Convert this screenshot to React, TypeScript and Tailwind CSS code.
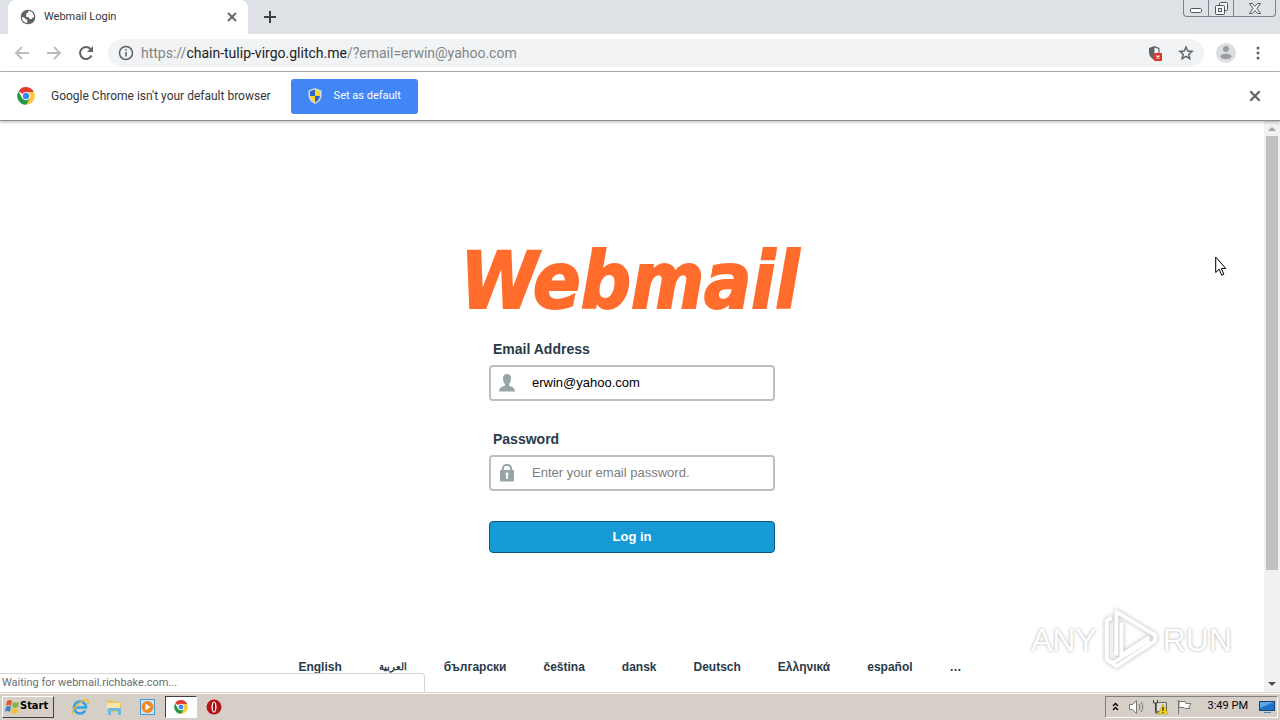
import React from 'react';

const LANGUAGES = ['English', 'العربية', 'български', 'čeština', 'dansk', 'Deutsch', 'Ελληνικά', 'español'];

const ChromeLogo = ({ className }: { className: string }) => (
  <svg viewBox="0 0 48 48" className={className} aria-hidden="true">
    <path d="M24 24 4.1 11.5A23 23 0 0 1 45 14H24z" fill="#e33b2e" />
    <path d="M24 14h21a23 23 0 0 1-20 33l9-17z" fill="#fcc934" />
    <path d="M4.1 12A23 23 0 0 0 25 47l9-17-10 4-10-4z" fill="#279847" />
    <circle cx="24" cy="24" r="11" fill="#fff" />
    <circle cx="24" cy="24" r="8.5" fill="#4285f4" />
  </svg>
);

const Cross = ({ className }: { className: string }) => (
  <svg viewBox="0 0 12 12" className={className} fill="none" stroke="currentColor" strokeWidth="1.8" aria-hidden="true">
    <path d="M2 2l8 8M10 2l-8 8" />
  </svg>
);

const TabStrip = () => (
  <div className="flex h-[34px] shrink-0 bg-[#dee1e6] pl-2">
    <div className="flex w-[240px] items-center rounded-t-lg bg-white pl-3 pr-[10px]">
      <svg viewBox="0 0 24 24" className="h-4 w-4 shrink-0" aria-hidden="true">
        <circle cx="12" cy="12" r="11" fill="#5f6368" />
        <path d="M13 3c-1 1-.5 2.500-2 3-1.500.4-2 1.500-1.500 3C8 10.500 9 12 11 12c2.500 0 3 1 3 3h3.500c1-2 2.500-2.500 3.500-3C21 7 17.500 3 13 3z" fill="#fff" />
        <path d="M3 12.500c2 0 4 .5 5 2 1 1.300 3 .5 3 2.500v4C6.500 21 3 17.500 3 12.500z" fill="#fff" />
      </svg>
      <span className="ml-2 flex-1 text-[11px] text-[#333639]">Webmail Login</span>
      <button aria-label="Close tab" className="text-[#5f6368]"><Cross className="h-3 w-3" /></button>
    </div>
    <button aria-label="New tab" className="ml-4 text-[#3c4043]">
      <svg viewBox="0 0 12 12" className="h-3 w-3" stroke="currentColor" strokeWidth="2" aria-hidden="true"><path d="M6 0v12M0 6h12" /></svg>
    </button>
    <div className="ml-auto mr-1 flex h-[17px] rounded-b border border-t-0 border-[#7c818c] text-[#50545f]">
      <button aria-label="Minimize" className="flex w-[25px] items-end justify-center border-r border-[#7c818c] pb-[3px]">
        <svg viewBox="0 0 12 5" className="h-[5px] w-3" aria-hidden="true"><rect x=".5" y=".5" width="11" height="4" rx="1" fill="#fff" stroke="currentColor" /></svg>
      </button>
      <button aria-label="Restore" className="flex w-[25px] items-center justify-center border-r border-[#7c818c]">
        <svg viewBox="0 0 13 13" className="h-[13px] w-[13px]" fill="#f5f6f8" stroke="currentColor" aria-hidden="true">
          <rect x="4.5" y=".5" width="8" height="8" rx="1" />
          <rect x=".5" y="3.5" width="9" height="9" rx="1" />
          <rect x="3.5" y="6.5" width="3" height="3" />
        </svg>
      </button>
      <button aria-label="Close" className="flex w-[41px] items-center justify-center">
        <svg viewBox="0 0 12 11" className="h-[11px] w-3" fill="#f5f6f8" stroke="currentColor" aria-hidden="true">
          <path d="M.5.5h3L6 3.500 8.500.5h3L8 5.500l3.500 5h-3L6 7.500l-2.500 3h-3L4 5.500z" />
        </svg>
      </button>
    </div>
  </div>
);

const Toolbar = () => (
  <div className="flex h-[38px] shrink-0 items-center border-b border-[#b3b5b8] bg-white px-[14px]">
    <button aria-label="Back" className="text-[#babcbe]">
      <svg viewBox="0 0 16 16" className="h-4 w-4" fill="none" stroke="currentColor" strokeWidth="1.8" aria-hidden="true"><path d="M15 8H2M8 2 2 8l6 6" /></svg>
    </button>
    <button aria-label="Forward" className="ml-4 text-[#babcbe]">
      <svg viewBox="0 0 16 16" className="h-4 w-4" fill="none" stroke="currentColor" strokeWidth="1.8" aria-hidden="true"><path d="M1 8h13M8 2l6 6-6 6" /></svg>
    </button>
    <button aria-label="Reload" className="ml-4 text-[#5f6368]">
      <svg viewBox="0 0 16 16" className="h-4 w-4" aria-hidden="true">
        <path d="M13.500 10.500A6 6 0 1 1 12.500 4" fill="none" stroke="currentColor" strokeWidth="2" />
        <path d="M15 1v6H9z" fill="currentColor" />
      </svg>
    </button>
    <div className="ml-[14px] flex h-7 flex-1 items-center rounded-full bg-[#f1f3f4] px-[10px]">
      <svg viewBox="0 0 16 16" className="h-4 w-4 shrink-0 text-[#5f6368]" aria-hidden="true">
        <circle cx="8" cy="8" r="6.5" fill="none" stroke="currentColor" strokeWidth="1.5" />
        <path d="M7.200 7h1.600v4.500H7.200zM7.200 4.200h1.600v1.600H7.200z" fill="currentColor" />
      </svg>
      <div className="ml-[7px] flex-1 text-sm text-[#80868b]">
        https://<span className="text-[#202124]">chain-tulip-virgo.glitch.me</span>/?email=erwin@yahoo.com
      </div>
      <svg viewBox="0 0 16 16" className="h-4 w-4" aria-hidden="true">
        <path d="M7.500 1 2 3v4c0 4 2.500 6.500 5.500 8 3-1.500 5-4 5-8V3z" fill="#5f6368" />
        <path d="M7.500 2.500v11c2.500-1.500 3.800-3.500 3.800-6.500V4z" fill="#fff" />
        <rect x="7" y="8" width="8" height="8" rx="1" fill="#d9362b" />
        <path d="M9.500 10.500l3 3m0-3l-3 3" stroke="#fff" strokeWidth="1.2" />
      </svg>
      <svg viewBox="0 0 24 24" className="ml-[15px] h-4 w-4" fill="none" stroke="#5f6368" strokeWidth="2.2" aria-hidden="true">
        <path d="M12 3l2.600 6 6.600.6-5 4.300 1.500 6.500-5.700-3.500-5.700 3.500 1.500-6.500-5-4.300 6.600-.6z" />
      </svg>
    </div>
    <button aria-label="Profile" className="ml-3">
      <svg viewBox="0 0 20 20" className="h-5 w-5" aria-hidden="true">
        <circle cx="10" cy="10" r="10" fill="#dcdde0" />
        <circle cx="10" cy="6" r="3" fill="#9b9ea2" />
        <ellipse cx="10" cy="13.5" rx="5.5" ry="2.8" fill="#9b9ea2" />
      </svg>
    </button>
    <button aria-label="Menu" className="ml-[14px] text-[#5f6368]">
      <svg viewBox="0 0 16 16" className="h-4 w-4" fill="currentColor" aria-hidden="true">
        <circle cx="8" cy="3" r="1.5" />
        <circle cx="8" cy="8" r="1.5" />
        <circle cx="8" cy="13" r="1.5" />
      </svg>
    </button>
  </div>
);

const ShieldIcon = () => (
  <svg viewBox="0 0 16 16" className="h-4 w-4" aria-hidden="true">
    <path d="M8 0 1.500 2.500V7c0 4.500 3 7.500 6.500 9 3.500-1.500 6.500-4.500 6.500-9V2.500z" fill="#d4dbe6" />
    <path d="M8 1.500 3 3.300V8h5z" fill="#2d68c4" />
    <path d="M8 1.500l5 1.800V8H8z" fill="#f9d535" />
    <path d="M3 8h5v6.500C5.500 13.300 3.300 11 3 8z" fill="#f9d535" />
    <path d="M8 8h5c-.3 3-2.500 5.300-5 6.500z" fill="#2d68c4" />
  </svg>
);

const DefaultBrowserBar = () => (
  <div className="z-10 flex h-[49px] shrink-0 items-center border-b border-[#8f8f8f] bg-white pl-[17px] pr-[18px] shadow-[0_1px_3px_rgba(0,0,0,0.3)]">
    <ChromeLogo className="h-[18px] w-[18px]" />
    <span className="ml-4 text-[12px] text-[#333639]">Google Chrome isn't your default browser</span>
    <button className="ml-5 flex h-[35px] w-[127px] items-center rounded-[3px] bg-[#4285f4] pl-4 text-[11px] text-white">
      <ShieldIcon />
      <span className="ml-[11px]">Set as default</span>
    </button>
    <button aria-label="Dismiss" className="ml-auto text-[#5f6368]"><Cross className="h-[14px] w-[14px]" /></button>
  </div>
);

const LoginForm = () => (
  <form className="mt-3 flex w-[286px] flex-col" onSubmit={(e) => e.preventDefault()}>
    <label htmlFor="email" className="pl-1 text-sm font-bold text-[#293a4a]">Email Address</label>
    <div className="mt-[6px] flex h-9 items-center rounded-[4px] border-2 border-[#bebebe] bg-white pl-2">
      <svg viewBox="0 0 16 18" className="h-[18px] w-4 shrink-0" fill="#95a5a6" aria-hidden="true">
        <path d="M8 0C5 0 3.800 2 4 5c.1 2.500 1 4 2 5v1.500C4 12.800.5 12.500 0 17.500h16c-.5-5-4-4.700-6-6V10c1-1 1.900-2.500 2-5 .2-3-1-5-4-5z" />
      </svg>
      <input id="email" type="text" defaultValue="erwin@yahoo.com" className="ml-[17px] min-w-0 flex-1 text-[13px] text-black outline-none" />
    </div>
    <label htmlFor="password" className="mt-7 pl-1 text-sm font-bold text-[#293a4a]">Password</label>
    <div className="mt-[6px] flex h-9 items-center rounded-[4px] border-2 border-[#bebebe] bg-white pl-2">
      <svg viewBox="0 0 16 18" className="h-[18px] w-4 shrink-0" aria-hidden="true">
        <path d="M3.800 8V5a4.200 4.200 0 0 1 8.400 0v3" fill="none" stroke="#95a5a6" strokeWidth="2" />
        <rect x="1" y="6" width="14" height="11.5" rx="1" fill="#95a5a6" />
        <path d="M8 8.500a1.700 1.700 0 0 1 .9 3.100V15H7.100v-3.400A1.700 1.700 0 0 1 8 8.500z" fill="#fff" />
      </svg>
      <input id="password" type="password" placeholder="Enter your email password." className="ml-[17px] min-w-0 flex-1 text-[13px] placeholder-[#7d7d7d] outline-none" />
    </div>
    <button className="mt-[30px] h-8 rounded-[4px] border border-[#095779] bg-[#179bd7] text-[13px] font-bold text-white">Log in</button>
  </form>
);

const Watermark = () => (
  <div className="absolute bottom-5 right-12 flex items-center font-['Liberation_Sans',sans-serif] text-[32px] leading-none text-white [text-shadow:0_0_3px_rgba(0,0,0,0.35)]">
    <span>ANY</span>
    <svg viewBox="0 0 60 66" className="ml-1 h-[64px] w-[58px] drop-shadow-[0_0_2px_rgba(0,0,0,0.3)]" fill="none" stroke="#fff" strokeWidth="4" strokeLinejoin="round" aria-hidden="true">
      <path d="M16 49V4l40 24v6L16 60l-4-3" />
      <path d="M21 15v34l29-19M11 10l-5 3v40l6 4 38-24" />
    </svg>
    <span className="ml-1">RUN</span>
  </div>
);

const Scrollbar = () => (
  <div className="flex w-4 shrink-0 flex-col items-center bg-[#f1f1f1] py-1">
    <svg viewBox="0 0 8 8" className="h-2 w-2" fill="#a3a3a3" aria-hidden="true"><path d="M0 6l4-4 4 4z" /></svg>
    <div className="mt-[3px] h-[77%] w-3 bg-[#c1c1c1]" />
    <svg viewBox="0 0 8 8" className="mt-auto h-2 w-2" fill="#505050" aria-hidden="true"><path d="M0 2l4 4 4-4z" /></svg>
  </div>
);

const Taskbar = () => (
  <footer className="flex h-7 shrink-0 items-center border-t border-[#d4d0c8] bg-[#d6cfc8] pl-[2px] shadow-[inset_0_1px_0_#fff]">
    <button className="flex h-[22px] w-[52px] items-center border border-b-[#404040] border-l-white border-r-[#404040] border-t-white pl-[1px] font-['DejaVu_Sans_Condensed','DejaVu_Sans',sans-serif] text-[11px] font-bold text-black">
      <svg viewBox="0 0 16 16" className="h-4 w-4 shrink-0" aria-hidden="true">
        <path d="M3 2q3-2 5 0L7 7q-3-2-5 0z" fill="#e5592b" />
        <path d="M9 3q3 1.500 6 0l-1 5q-3 1.500-6 0z" fill="#7db648" />
        <path d="M2 8q3-2 5 0l-1 5q-3-2-5 0z" fill="#3b82cf" />
        <path d="M8 9q3 1.500 6 0l-1 5q-3 1.500-6 0z" fill="#f6c130" />
      </svg>
      Start
    </button>
    <button aria-label="Internet Explorer" className="ml-[17px]">
      <svg viewBox="0 0 18 18" className="h-[18px] w-[18px]" fill="none" aria-hidden="true">
        <path d="M14.200 12.500A6 6 0 1 1 15 9.500H5" stroke="#35a3df" strokeWidth="2.6" />
        <path d="M2 16.500C-1 13 11 0 17 2c1 1 0 3-1 4" stroke="#eab838" strokeWidth="1.3" />
      </svg>
    </button>
    <button aria-label="Explorer" className="ml-4">
      <svg viewBox="0 0 18 18" className="h-[18px] w-[18px]" aria-hidden="true">
        <path d="M2 2h6l1 2h7v10H2z" fill="#edc65b" />
        <path d="M2 5h13v6H2z" fill="#f9e8a4" />
        <path d="M3 10h13v7h-3v-4H6v4H3z" fill="#6db9df" />
      </svg>
    </button>
    <button aria-label="Media Player" className="ml-4">
      <svg viewBox="0 0 18 18" className="h-[18px] w-[18px]" aria-hidden="true">
        <rect x="1.5" y="1.5" width="14" height="15" fill="#cce5f7" stroke="#4a98d2" />
        <circle cx="8.5" cy="9" r="6" fill="#f18921" />
        <path d="M6.500 5.500v7l5-3.500z" fill="#fff" />
      </svg>
    </button>
    <button aria-label="Chrome" className="ml-2 flex h-[22px] w-[32px] items-center justify-center border border-b-white border-l-[#404040] border-r-white border-t-[#404040] bg-white">
      <ChromeLogo className="h-[14px] w-[14px]" />
    </button>
    <button aria-label="Opera" className="ml-[9px]">
      <svg viewBox="0 0 16 16" className="h-4 w-4" aria-hidden="true">
        <circle cx="8" cy="8" r="7.5" fill="#b4151a" />
        <ellipse cx="8" cy="8" rx="2.5" ry="5.5" fill="#fff" />
        <ellipse cx="8" cy="8" rx="1.2" ry="4.5" fill="#911" />
      </svg>
    </button>
    <div className="ml-auto mr-[2px] flex h-[22px] items-center border border-b-white border-l-[#808080] border-r-white border-t-[#808080] pl-[6px] pr-[2px]">
      <svg viewBox="0 0 7 9" className="h-[9px] w-[7px]" fill="none" stroke="#000" strokeWidth="1.3" aria-hidden="true"><path d="M1 4l2.500-2.500L6 4M1 8l2.500-2.500L6 8" /></svg>
      <svg viewBox="0 0 18 16" className="ml-[9px] h-4 w-[18px]" fill="#fff" stroke="#777" aria-hidden="true">
        <path d="M1.500 5.500h3l4-4v13l-4-4h-3z" />
        <path d="M11 5q2 3 0 6M13 3q3.500 5 0 10" fill="none" />
      </svg>
      <svg viewBox="0 0 16 16" className="ml-[6px] h-4 w-4" aria-hidden="true">
        <path d="M4.500 3.500h10v9h-10z" fill="#ddd" stroke="#666" />
        <path d="M1.500 1v3h4V1M3.500 4v10h4" fill="none" stroke="#444" />
        <path d="M11 5l5 10H6z" fill="#f6d51c" stroke="#b59700" strokeWidth=".5" />
        <path d="M11 8v4M11 13v1" stroke="#000" />
      </svg>
      <svg viewBox="0 0 18 16" className="ml-2 h-4 w-[18px]" fill="#fff" stroke="#777" aria-hidden="true">
        <path d="M2.500 1v14M3 2.500h6l1 2h5l-2 3 1 2H9l-1-1H3z" />
      </svg>
      <span className="ml-[14px] text-[11px] text-black">3:49 PM</span>
      <svg viewBox="0 0 16 14" className="ml-[11px] h-[14px] w-4" aria-hidden="true">
        <rect x=".5" y="1.5" width="15" height="9" fill="#2173ca" stroke="#17457c" />
        <path d="M1 2h14L1 8z" fill="#5aa6e6" />
        <path d="M5 12h7v1H5z" fill="#5d80a5" />
      </svg>
    </div>
  </footer>
);

export default function App() {
  return (
    <div className="flex h-screen flex-col overflow-hidden bg-white font-['Roboto','Noto_Sans',sans-serif]">
      <header className="contents">
        <TabStrip />
        <Toolbar />
        <DefaultBrowserBar />
      </header>
      <div className="relative flex min-h-0 flex-1">
        <main className="flex flex-1 flex-col items-center font-['Liberation_Sans',Arial,sans-serif]">
          <h1 className="mt-[114px] pr-1 font-['DejaVu_Sans_Condensed','DejaVu_Sans',sans-serif] text-[78px] font-bold italic leading-[92px] text-[#ff6c2c] [-webkit-text-stroke:2px_#ff6c2c]">Webmail</h1>
          <LoginForm />
          <nav className="mt-auto flex gap-x-[37px] pb-[17px] pr-1 text-[12px] font-bold leading-4 text-[#293a4a]">
            {LANGUAGES.map((label) => (
              <a key={label} href="#" className={label === 'العربية' ? 'text-[10px]' : ''}>{label}</a>
            ))}
            <a href="#">…</a>
          </nav>
        </main>
        <Scrollbar />
        <div className="absolute bottom-0 left-0 flex h-[19px] w-[425px] items-center rounded-tr border-r border-t border-[#d5d5d5] bg-white pl-[2px] text-[11px] text-[#6b6e72]">
          Waiting for webmail.richbake.com...
        </div>
        <Watermark />
      </div>
      <Taskbar />
      <svg viewBox="0 0 12 20" className="absolute right-[53px] top-[256px] h-5 w-3" fill="#fff" stroke="#000" aria-hidden="true">
        <path d="M.7 1v15.500l3.500-3.300 2.500 6 2.200-1-2.600-5.700h4.500z" />
      </svg>
    </div>
  );
}
